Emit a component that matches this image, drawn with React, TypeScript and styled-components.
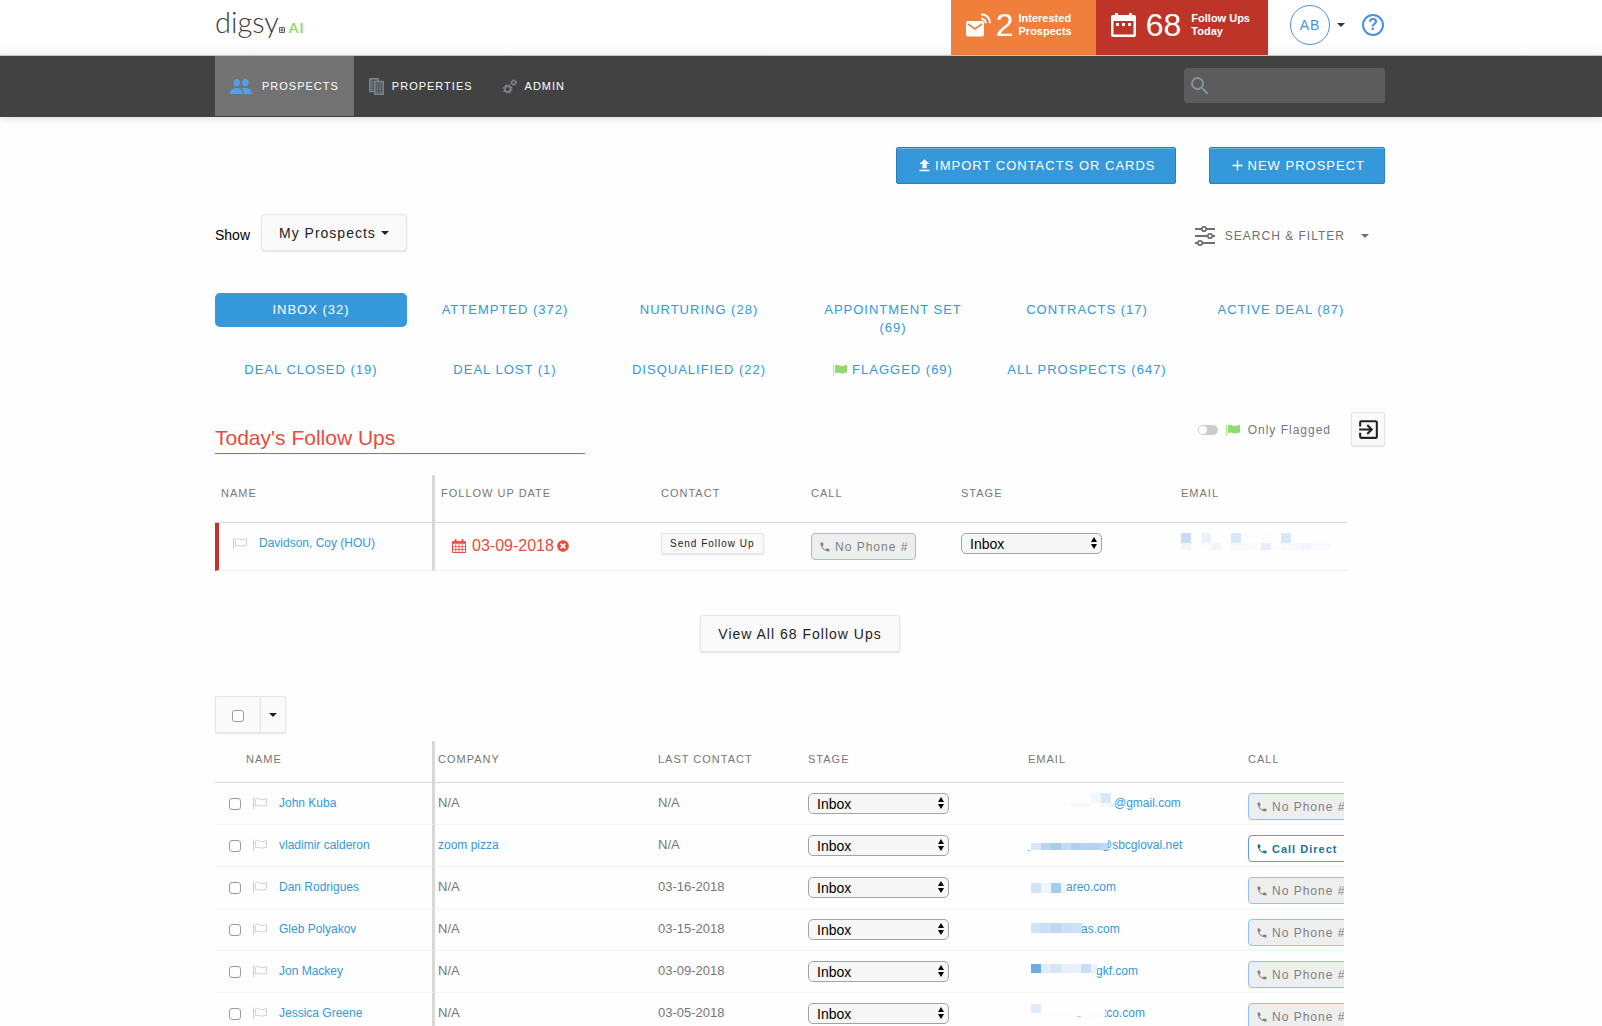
import React from "react";
import styled, { createGlobalStyle, css } from "styled-components";
import {
  MdSearch,
  MdFileUpload,
  MdAdd,
  MdExitToApp,
  MdPhone,
} from "react-icons/md";
import { FaTimesCircle } from "react-icons/fa";

const color = {
  blue: "#3498db",
  blueDark: "#2c7fb8",
  navy: "#424242",
  navActive: "#727272",
  grey: "#777777",
  line: "#d8d8d8",
  faint: "#f2f2f2",
  red: "#e74c3c",
  redDark: "#bf3429",
  orange: "#ef7f3a",
  green: "#8fdb6c",
  soft: "#fafafa",
};

const GlobalStyle = createGlobalStyle`
  *, *::before, *::after { box-sizing: border-box; }
  html { scrollbar-width: none; }
  body {
    margin: 0;
    background: #fefefe;
    color: #000;
    font-family: "Liberation Sans", Arial, Helvetica, sans-serif;
    font-size: 14px;
    line-height: 20px;
  }
  button, input, select { font-family: inherit; }
  button { cursor: pointer; }
  a { text-decoration: none; }
  svg { display: block; flex: none; }
`;

const Container = styled.div`
  width: 100%;
  max-width: 1200px;
  margin: 0 auto;
  padding: 0 16px 0 14px;
`;

/* ---------- top bar ---------- */

const TopBar = styled.header`
  background: linear-gradient(#fff 70%, #f9f9f9);
  border-bottom: 1px solid #c9c9c9;
`;

const TopInner = styled(Container)`
  display: flex;
  justify-content: space-between;
  height: 55px;
`;

const Logo = styled.a`
  display: flex;
  align-items: baseline;
  height: 40px;
  color: #3c3c3c;
  font-family: Lato, "Liberation Sans", sans-serif;
  font-size: 29px;
  font-weight: 300;
  line-height: 44px;
`;

const LogoSuffix = styled.span`
  margin-left: 4px;
  color: ${color.green};
  font-size: 14px;
  font-weight: 700;
  letter-spacing: 1px;
`;

const TopRight = styled.div`
  display: flex;
`;

const Counter = styled.a<{ $bg: string; $gap: number; $right: number }>`
  display: flex;
  align-items: center;
  gap: ${(p) => p.$gap}px;
  padding: 0 ${(p) => p.$right}px 6px 15px;
  background: ${(p) => p.$bg};
  color: #fff;
`;

const CounterValue = styled.span`
  font-size: 32px;
  line-height: 40px;
`;

const CounterLabel = styled.span`
  font-size: 11px;
  font-weight: 700;
  line-height: 13px;
`;

const Account = styled.div`
  display: flex;
  align-items: center;
  padding: 0 1px 6px 22px;
  color: #4a90e2;
`;

const AvatarButton = styled.button`
  display: flex;
  align-items: center;
  gap: 7px;
  margin-right: 17px;
  padding: 0;
  border: 0;
  background: none;
  color: #333;
`;

const Avatar = styled.span`
  display: flex;
  align-items: center;
  justify-content: center;
  width: 40px;
  height: 40px;
  border: 1px solid #4a90e2;
  border-radius: 50%;
  color: #4a90e2;
  font-size: 14px;
  letter-spacing: 1px;
`;

const HelpLink = styled.a`
  display: flex;
  align-items: center;
  justify-content: center;
  width: 22px;
  height: 22px;
  border: 2px solid #4a90e2;
  border-radius: 50%;
  color: #4a90e2;
  font-size: 16px;
  font-weight: 700;
  line-height: 18px;
`;

/* ---------- navigation ---------- */

const NavBar = styled.nav`
  background: ${color.navy};
  box-shadow: 0 2px 8px rgba(0, 0, 0, 0.12);
`;

const NavInner = styled(Container)`
  display: flex;
  align-items: center;
  justify-content: space-between;
  height: 61px;
`;

const NavItems = styled.div`
  display: flex;
  align-self: flex-start;
`;

const NavItem = styled.a<{ $active?: boolean }>`
  display: flex;
  align-items: center;
  gap: ${(p) => (p.$active ? 10 : 8)}px;
  height: 60px;
  padding: 0 15px;
  background: ${(p) => (p.$active ? color.navActive : "transparent")};
  color: #fff;
  font-size: 11px;
  letter-spacing: 1px;

  & > svg {
    color: ${(p) => (p.$active ? "#559fe8" : "#7b858e")};
  }
`;

const SearchBox = styled.label`
  display: flex;
  align-items: center;
  width: 201px;
  height: 35px;
  margin-bottom: 2px;
  padding-left: 4px;
  border-radius: 3px;
  background: #5c5c5c;
  color: #87929c;
`;

const SearchInput = styled.input`
  flex: 1;
  min-width: 0;
  height: 100%;
  border: 0;
  outline: 0;
  background: transparent;
  color: #fff;
  font-size: 14px;
`;

/* ---------- buttons ---------- */

const buttonBase = css`
  display: flex;
  align-items: center;
  justify-content: center;
  border-radius: 2px;
`;

const PrimaryButton = styled.button`
  ${buttonBase}
  gap: 2px;
  height: 37px;
  padding: 0 19px;
  border: 1px solid ${color.blueDark};
  background: ${color.blue};
  box-shadow: inset 0 1px 0 #6cb6e8;
  color: #fff;
  font-size: 13px;
  letter-spacing: 1px;
`;

const SoftButton = styled.button<{ $round?: boolean }>`
  ${buttonBase}
  gap: 5px;
  height: 37px;
  padding: 0 17px;
  border: 1px solid #e6e6e6;
  border-radius: ${(p) => (p.$round ? 4 : 2)}px;
  background: ${color.soft};
  box-shadow: 0 1px 2px rgba(0, 0, 0, 0.1);
  color: #222;
  font-size: 14px;
  letter-spacing: 1px;
`;

const SquareButton = styled(SoftButton)`
  width: 34px;
  height: 34px;
  padding: 0;
`;

const SmallButton = styled(SoftButton)`
  height: 21px;
  padding: 0 8px;
  font-size: 10px;
  white-space: nowrap;
`;

const CallButton = styled.button<{ $active?: boolean }>`
  ${buttonBase}
  justify-content: flex-start;
  gap: 4px;
  width: 105px;
  height: 27px;
  padding: 0 0 0 7px;
  border: 1px solid ${(p) => (p.$active ? "#5a9fe0" : "#90c0ee")};
  border-radius: 4px;
  background: ${(p) => (p.$active ? "#fff" : "#eeeeee")};
  color: ${(p) => (p.$active ? "#1c7396" : "#808080")};
  font-size: ${(p) => (p.$active ? 11 : 12)}px;
  font-weight: ${(p) => (p.$active ? 700 : 400)};
  letter-spacing: 1px;
  white-space: nowrap;
`;

/* ---------- page sections ---------- */

const Actions = styled.div`
  display: flex;
  justify-content: flex-end;
  gap: 33px;
  margin-top: 30px;
`;

const FilterRow = styled.div`
  display: flex;
  align-items: center;
  justify-content: space-between;
  margin-top: 30px;
`;

const ShowGroup = styled.div`
  display: flex;
  align-items: center;
  gap: 11px;
`;

const ShowLabel = styled.span`
  padding-top: 4px;
`;

const FilterButton = styled.button`
  display: flex;
  align-items: center;
  gap: 10px;
  padding: 6px 16px 0 0;
  border: 0;
  background: none;
  color: #707070;
  font-size: 12px;
  letter-spacing: 1px;
`;

const FilterCaret = styled.span`
  padding-left: 6px;
`;

const StageTabs = styled.div`
  display: grid;
  grid-template-columns: repeat(6, 1fr);
  gap: 8px 2px;
  align-items: start;
  margin-top: 42px;
  padding-right: 8px;
`;

const StageTab = styled.a<{ $active?: boolean }>`
  display: flex;
  align-items: center;
  justify-content: center;
  gap: 5px;
  padding: 8px 16px;
  border-radius: 5px;
  background: ${(p) => (p.$active ? color.blue : "transparent")};
  color: ${(p) => (p.$active ? "#fff" : color.blue)};
  font-size: 13px;
  letter-spacing: 1px;
  line-height: 18px;
  text-align: center;
`;

const AllTab = styled(StageTab)`
  padding: 8px 0;
  white-space: nowrap;
`;

const SectionHead = styled.div`
  display: flex;
  align-items: flex-start;
  justify-content: space-between;
  margin-top: 25px;
`;

const SectionTitle = styled.h2`
  width: 370px;
  margin: 0;
  padding-top: 10px;
  border-bottom: 1px solid ${color.red};
  color: ${color.red};
  font-size: 21px;
  font-weight: 400;
  line-height: 31px;
`;

const HeadControls = styled.div`
  display: flex;
  align-items: center;
  gap: 20px;
`;

const ToggleLabel = styled.label`
  display: flex;
  align-items: center;
  gap: 8px;
  padding-top: 2px;
  color: ${color.grey};
  font-size: 12px;
  letter-spacing: 1px;
`;

const Toggle = styled.input`
  appearance: none;
  display: flex;
  align-items: center;
  width: 20px;
  height: 10px;
  margin: 0;
  padding: 1px;
  border-radius: 5px;
  background: #cccccc;

  &::before {
    content: "";
    width: 8px;
    height: 8px;
    border-radius: 50%;
    background: #fff;
  }
  &:checked {
    justify-content: flex-end;
    background: ${color.green};
  }
`;

/* ---------- tables ---------- */

const TableFrame = styled.div<{ $max: number; $top: number }>`
  max-width: ${(p) => p.$max}px;
  margin-top: ${(p) => p.$top}px;
  overflow: hidden;
`;

const Table = styled.table<{ $width: number; $pad: number }>`
  width: ${(p) => p.$width}px;
  table-layout: fixed;
  border-collapse: separate;
  border-spacing: 0;

  th,
  td {
    padding: 10px 0 0 ${(p) => p.$pad}px;
    vertical-align: top;
    text-align: left;
  }
  th:first-child,
  td:first-child {
    border-right: 3px solid ${color.line};
  }
`;

const HeadCell = styled.th<{ $h: number }>`
  height: ${(p) => p.$h}px;
  border-bottom: 1px solid #d4d4d4;
  color: ${color.grey};
  font-size: 11px;
  font-weight: 400;
  letter-spacing: 1px;
  line-height: 16px;
`;

const HeadText = styled.span<{ $indent: number }>`
  padding-left: ${(p) => p.$indent}px;
`;

const Cell = styled.td<{ $h: number }>`
  height: ${(p) => p.$h}px;
  border-bottom: 1px solid ${color.faint};
  color: ${color.grey};
  font-size: 13px;
  line-height: 20px;
`;

const MarkedCell = styled(Cell)`
  border-left: 4px solid ${color.redDark};
`;

const NameLine = styled.div<{ $indent: number }>`
  display: flex;
  align-items: center;
  gap: 12px;
  padding-left: ${(p) => p.$indent}px;
`;

const TextLink = styled.a`
  color: ${color.blue};
  font-size: 12px;
`;

const Checkbox = styled.input`
  appearance: none;
  width: 12px;
  height: 12px;
  margin: 2px 0 0;
  border: 1px solid #9c9c9c;
  border-radius: 3px;
  background: #fff;
  &:checked {
    background: ${color.blue};
  }
`;

const DueDate = styled.div`
  display: flex;
  align-items: center;
  padding: 3px 0 0 11px;
  color: ${color.red};
`;

const DueText = styled.span`
  margin: 0 3px 0 6px;
  font-size: 16px;
`;

const SelectWrap = styled.div`
  position: relative;
  width: 141px;
  height: 21px;

  & > svg {
    position: absolute;
    top: 4px;
    right: 5px;
    pointer-events: none;
  }
`;

const StageSelect = styled.select`
  appearance: none;
  display: block;
  width: 100%;
  height: 100%;
  padding: 0 20px 0 8px;
  border: 1px solid #a2a2a2;
  border-radius: 5px;
  background: #f7f7f7;
  color: #000;
  font-size: 14px;
`;

const Center = styled.div`
  display: flex;
  justify-content: center;
  margin-top: 44px;
`;

const SelectAll = styled.div`
  display: flex;
  margin-top: 44px;
`;

const SelectAllBox = styled.label`
  display: flex;
  align-items: center;
  justify-content: center;
  width: 45px;
  height: 37px;
  border: 1px solid #e6e6e6;
  border-right: 0;
  border-radius: 2px 0 0 2px;
  background: ${color.soft};
  box-shadow: 0 1px 2px rgba(0, 0, 0, 0.1);
`;

const SelectAllMenu = styled(SoftButton)`
  width: 26px;
  padding: 0;
  border-radius: 0 2px 2px 0;
`;

const EmailLink = styled(TextLink)<{ $start: number }>`
  display: block;
  position: relative;
  height: 20px;
  padding-left: ${(p) => p.$start}px;

  & > svg {
    position: absolute;
    top: 0;
    left: 0;
  }
`;

/* ---------- drawings ---------- */

const Caret = ({ size = 8 }: { size?: number }) => (
  <svg width={size} height={size / 2} viewBox="0 0 8 4" fill="currentColor" aria-hidden="true">
    <path d="M0 0h8L4 4z" />
  </svg>
);

const WindowMark = () => (
  <svg width="6" height="6" viewBox="0 0 6 6" fill="none" stroke="#555" aria-hidden="true">
    <path d="M.5.5h5v5h-5zM3 0v6M0 3h6" strokeWidth="0.9" />
  </svg>
);

const People = () => (
  <svg width="22" height="15" viewBox="0 0 22 15" fill="currentColor" aria-hidden="true">
    <ellipse cx="6.800" cy="3.600" rx="3.200" ry="3.600" />
    <ellipse cx="15.400" cy="3.600" rx="3.200" ry="3.600" />
    <path d="M0 15c0-4 2.500-6 6.700-6 3.600 0 5.600 2 5.600 6z" />
    <path d="M11.300 9.400c1.200-.3 2.500-.4 4-.4 4.200 0 6.700 2 6.700 6h-8.500c0-2.500-.7-4.400-2.200-5.600z" />
  </svg>
);

const MailSignal = () => (
  <svg width="25" height="24" viewBox="0 0 25 24" fill="none" aria-hidden="true">
    <rect x="0" y="8" width="18" height="15.500" rx="2" fill="#fff" />
    <path d="M2 11l7 5 7-5" stroke="#ef7f3a" strokeWidth="1.600" />
    <path d="M15 5.500c2.800.3 4.500 2 4.800 4.800M15 1.200c5.300.3 8.700 3.700 9 9" stroke="#fff" strokeWidth="1.900" />
  </svg>
);

const CalendarBig = () => (
  <svg width="25" height="24" viewBox="0 0 25 24" aria-hidden="true">
    <path
      fill="#fff"
      fillRule="evenodd"
      d="M4 0h3v2h11V0h3v2h2a2 2 0 0 1 2 2v18a2 2 0 0 1-2 2H2a2 2 0 0 1-2-2V4a2 2 0 0 1 2-2h2zM2.500 8v13.500h20V8z"
    />
    <path fill="#fff" d="M5 10h3v3H5zM11 10h3v3h-3zM17 10h3v3h-3z" />
  </svg>
);

const Buildings = () => (
  <svg width="15" height="17" viewBox="0 0 15 17" fill="none" stroke="currentColor" aria-hidden="true">
    <path d="M.8.8h8.400v2.800H5.800v9.900H.8z" fill="currentColor" fillOpacity="0.35" stroke="none" />
    <path d="M5.800 3.600h8.400v12.600H5.800z" fill="currentColor" fillOpacity="0.35" stroke="none" />
    <path d="M5 13.500H.8V.8h8.400V3" strokeWidth="1.500" />
    <path d="M5.800 3.600h8.400v12.600H5.800z" strokeWidth="1.500" />
    <path d="M8.500 5.500v9M11.500 5.500v9M3 3v9" strokeWidth="1.200" strokeDasharray="1.500 1" />
  </svg>
);

const Gears = () => (
  <svg width="14" height="15" viewBox="0 0 14 15" fill="none" stroke="currentColor" aria-hidden="true">
    <circle cx="4.700" cy="10" r="2.900" strokeWidth="1.700" />
    <circle cx="4.700" cy="10" r="4.100" strokeWidth="1.300" strokeDasharray="1.600 1.620" />
    <circle cx="10.700" cy="3.500" r="1.900" strokeWidth="1.400" />
    <circle cx="10.700" cy="3.500" r="2.800" strokeWidth="1.100" strokeDasharray="1.100 1.100" />
  </svg>
);

const Sliders = () => (
  <svg width="20" height="20" viewBox="0 0 20 20" fill="none" stroke="currentColor" strokeWidth="1.800" aria-hidden="true">
    <path d="M0 3h6.500M11.500 3H20M0 10h12.500M17.500 10H20M0 17h2.500M7.500 17H20" />
    <circle cx="9" cy="3" r="2.200" />
    <circle cx="15" cy="10" r="2.200" />
    <circle cx="5" cy="17" r="2.200" />
  </svg>
);

const GreenFlag = () => (
  <svg width="14" height="12" viewBox="0 0 14 12" aria-hidden="true">
    <path d="M.5.500v11.500" stroke="#b5e89c" strokeWidth="1.200" />
    <path d="M2 1.500c3-2 5 1.500 8 .4 1.500-.5 3-.9 4-.9v7.500c-2 0-3 .9-5 .9-2.500 0-4-1.900-7 0z" fill="#8fdb6c" />
  </svg>
);

const EmptyFlag = () => (
  <svg width="14" height="12" viewBox="0 0 14 12" fill="none" stroke="#cfcfcf" aria-hidden="true">
    <path d="M.5.500v11.500" strokeWidth="1" />
    <path d="M2.300 2.200c3-2 5 1.300 7.700.3 1.200-.5 2.500-.8 3.500-.8v6.600c-2 0-3 .8-4.700.8-2.200 0-3.800-1.700-6.500 0z" />
  </svg>
);

const CalendarSmall = () => (
  <svg width="14" height="14" viewBox="0 0 14 14" fill="none" stroke="currentColor" aria-hidden="true">
    <path d="M.5 3h13v10.500H.5z" />
    <path d="M.5 3.500h13" strokeWidth="2.500" />
    <path d="M3.500.300v3M10.500.300v3" strokeWidth="2" />
    <path d="M3.800 5v8.500M7 5v8.500M10.200 5v8.500M.5 7.700h13M.5 10.500h13" strokeWidth=".8" />
  </svg>
);

const UpDown = () => (
  <svg width="6" height="12" viewBox="0 0 6 12" fill="#000" aria-hidden="true">
    <path d="M3 0l3 5H0zM3 12L0 7h6z" />
  </svg>
);

type Block = [number, number, number, number, string];

const Mosaic = ({ blocks, width = 166 }: { blocks: Block[]; width?: number }) => (
  <svg width={width} height="24" viewBox={`0 0 ${width} 24`} shapeRendering="crispEdges" aria-hidden="true">
    {blocks.map(([x, y, w, h, fill], i) => (
      <rect key={i} x={x} y={y} width={w} height={h} fill={fill} />
    ))}
  </svg>
);

/* ---------- data ---------- */

const followUpBlocks: Block[] = [
  [0, 0, 10, 10, "#c8dcf2"],
  [20, 0, 10, 10, "#e9f3fb"],
  [50, 0, 10, 10, "#d8e8f7"],
  [80, 0, 10, 10, "#fafcff"],
  [100, 0, 10, 10, "#d8e8f7"],
  [0, 10, 10, 7, "#f2f6fc"],
  [10, 10, 20, 7, "#fbfcff"],
  [30, 10, 10, 7, "#f1f6fc"],
  [50, 10, 20, 7, "#f8f9fe"],
  [70, 10, 10, 7, "#fafbff"],
  [80, 10, 10, 7, "#e7effa"],
  [90, 10, 10, 7, "#fbfcff"],
  [100, 10, 20, 7, "#f8f9fe"],
  [120, 10, 10, 7, "#f2f6fc"],
  [130, 10, 20, 7, "#f9fafe"],
];

type Prospect = {
  name: string;
  company?: string;
  last: string;
  email: string;
  start: number;
  blocks: Block[];
  phone?: boolean;
};

const prospects: Prospect[] = [
  {
    name: "John Kuba",
    last: "N/A",
    email: "@gmail.com",
    start: 86,
    blocks: [
      [63, 0, 10, 10, "#f2f7fb"],
      [73, 0, 10, 10, "#d8e8f6"],
      [3, 10, 40, 4, "#fcfdfe"],
      [43, 10, 20, 4, "#f5f8fd"],
      [73, 10, 10, 4, "#f3f8fd"],
      [83, 10, 4, 4, "#e2eefa"],
    ],
  },
  {
    name: "vladimir calderon",
    company: "zoom pizza",
    last: "N/A",
    email: "@sbcgloval.net",
    start: 72,
    phone: true,
    blocks: [
      [3, 0, 77, 8, "#fefefe"],
      [3, 8, 10, 7, "#d8e6f5"],
      [13, 8, 10, 7, "#bcd5ef"],
      [23, 8, 10, 7, "#a8cbeb"],
      [33, 8, 10, 7, "#c4dbf2"],
      [43, 8, 10, 7, "#aecfee"],
      [53, 8, 20, 7, "#b6d3ef"],
      [73, 8, 7, 7, "#bdd7f0"],
      [0, 15, 2, 1, "#6ab2e4"],
    ],
  },
  {
    name: "Dan Rodrigues",
    last: "03-16-2018",
    email: "areo.com",
    start: 38,
    blocks: [
      [3, 6, 10, 10, "#d2e3f5"],
      [13, 6, 10, 10, "#f0f6fb"],
      [23, 6, 10, 10, "#a3cdee"],
      [33, 6, 5, 10, "#f3f8fd"],
    ],
  },
  {
    name: "Gleb Polyakov",
    last: "03-15-2018",
    email: "as.com",
    start: 53,
    blocks: [
      [3, 4, 10, 10, "#cfe4f6"],
      [13, 4, 10, 10, "#c8def4"],
      [23, 4, 10, 10, "#c1d7f1"],
      [33, 4, 10, 10, "#cadff4"],
      [43, 4, 11, 10, "#cce2f6"],
    ],
  },
  {
    name: "Jon Mackey",
    last: "03-09-2018",
    email: "gkf.com",
    start: 68,
    blocks: [
      [3, 3, 10, 9, "#6bade2"],
      [13, 3, 10, 9, "#e0ecf8"],
      [23, 3, 10, 9, "#d6e5f4"],
      [33, 3, 10, 9, "#e5eef9"],
      [43, 3, 10, 9, "#e8f1fa"],
      [53, 3, 10, 9, "#c6dff4"],
      [63, 3, 6, 9, "#ecf3fb"],
      [63, 12, 5, 8, "#f9fbfd"],
    ],
  },
  {
    name: "Jessica Greene",
    last: "03-05-2018",
    email: "tco.com",
    start: 75,
    blocks: [
      [3, 1, 10, 9, "#e0ebf7"],
      [3, 10, 40, 4, "#fbfcfe"],
      [63, 10, 10, 4, "#f8fafd"],
      [49, 13, 4, 1, "#a9cfee"],
      [73, 3, 4, 13, "#fdfdfe"],
    ],
  },
];

const stages: { label: string; active?: boolean; flag?: boolean; wide?: boolean }[] = [
  { label: "INBOX (32)", active: true },
  { label: "ATTEMPTED (372)" },
  { label: "NURTURING (28)" },
  { label: "APPOINTMENT SET (69)" },
  { label: "CONTRACTS (17)" },
  { label: "ACTIVE DEAL (87)" },
  { label: "DEAL CLOSED (19)" },
  { label: "DEAL LOST (1)" },
  { label: "DISQUALIFIED (22)" },
  { label: "FLAGGED (69)", flag: true },
  { label: "ALL PROSPECTS (647)", wide: true },
];

/* ---------- composed parts ---------- */

const StagePicker = ({ label }: { label: string }) => (
  <SelectWrap>
    <StageSelect aria-label={label} defaultValue="Inbox">
      <option>Inbox</option>
      <option>Attempted</option>
      <option>Nurturing</option>
    </StageSelect>
    <UpDown />
  </SelectWrap>
);

const Call = ({ active }: { active?: boolean }) => (
  <CallButton type="button" $active={active}>
    <MdPhone size={12} />
    {active ? "Call Direct" : "No Phone #"}
  </CallButton>
);

const FollowUpsTable = () => (
  <TableFrame $max={1132} $top={21}>
    <Table $width={1132} $pad={6}>
      <colgroup>
        <col width="220" />
        <col width="220" />
        <col width="150" />
        <col width="150" />
        <col width="220" />
        <col width="172" />
      </colgroup>
      <thead>
        <tr>
          {["NAME", "FOLLOW UP DATE", "CONTACT", "CALL", "STAGE", "EMAIL"].map((h) => (
            <HeadCell key={h} scope="col" $h={48}>
              {h}
            </HeadCell>
          ))}
        </tr>
      </thead>
      <tbody>
        <tr>
          <MarkedCell $h={48}>
            <NameLine $indent={8}>
              <EmptyFlag />
              <TextLink href="#davidson">Davidson, Coy (HOU)</TextLink>
            </NameLine>
          </MarkedCell>
          <Cell $h={48}>
            <DueDate>
              <CalendarSmall />
              <DueText>03-09-2018</DueText>
              <FaTimesCircle size={12} />
            </DueDate>
          </Cell>
          <Cell $h={48}>
            <SmallButton type="button">Send Follow Up</SmallButton>
          </Cell>
          <Cell $h={48}>
            <Call />
          </Cell>
          <Cell $h={48}>
            <StagePicker label="Stage of Davidson, Coy" />
          </Cell>
          <Cell $h={48}>
            <Mosaic blocks={followUpBlocks} />
          </Cell>
        </tr>
      </tbody>
    </Table>
  </TableFrame>
);

const ProspectsTable = () => (
  <TableFrame $max={1129} $top={8}>
    <Table $width={1180} $pad={3}>
      <colgroup>
        <col width="220" />
        <col width="220" />
        <col width="150" />
        <col width="220" />
        <col width="220" />
        <col width="150" />
      </colgroup>
      <thead>
        <tr>
          {["NAME", "COMPANY", "LAST CONTACT", "STAGE", "EMAIL", "CALL"].map((h, i) => (
            <HeadCell key={h} scope="col" $h={42}>
              <HeadText $indent={i === 0 ? 28 : 0}>{h}</HeadText>
            </HeadCell>
          ))}
        </tr>
      </thead>
      <tbody>
        {prospects.map((p) => (
          <tr key={p.name}>
            <Cell $h={42}>
              <NameLine $indent={11}>
                <Checkbox type="checkbox" aria-label={`Select ${p.name}`} />
                <EmptyFlag />
                <TextLink href="#prospect">{p.name}</TextLink>
              </NameLine>
            </Cell>
            <Cell $h={42}>{p.company ? <TextLink href="#company">{p.company}</TextLink> : "N/A"}</Cell>
            <Cell $h={42}>{p.last}</Cell>
            <Cell $h={42}>
              <StagePicker label={`Stage of ${p.name}`} />
            </Cell>
            <Cell $h={42}>
              <EmailLink href="#email" $start={p.start}>
                {p.email}
                <Mosaic blocks={p.blocks} />
              </EmailLink>
            </Cell>
            <Cell $h={42}>
              <Call active={p.phone} />
            </Cell>
          </tr>
        ))}
      </tbody>
    </Table>
  </TableFrame>
);

export default function App() {
  return (
    <>
      <GlobalStyle />
      <TopBar>
        <TopInner>
          <Logo href="#home">
            digsy
            <WindowMark />
            <LogoSuffix>AI</LogoSuffix>
          </Logo>
          <TopRight>
            <Counter href="#interested" $bg={color.orange} $gap={5} $right={24}>
              <MailSignal />
              <CounterValue>2</CounterValue>
              <CounterLabel>
                Interested
                <br />
                Prospects
              </CounterLabel>
            </Counter>
            <Counter href="#followups" $bg={color.redDark} $gap={10} $right={18}>
              <CalendarBig />
              <CounterValue>68</CounterValue>
              <CounterLabel>
                Follow Ups
                <br />
                Today
              </CounterLabel>
            </Counter>
            <Account>
              <AvatarButton type="button" aria-label="Account menu">
                <Avatar>AB</Avatar>
                <Caret />
              </AvatarButton>
              <HelpLink href="#help" aria-label="Help">
                ?
              </HelpLink>
            </Account>
          </TopRight>
        </TopInner>
      </TopBar>

      <NavBar>
        <NavInner>
          <NavItems>
            <NavItem href="#prospects" $active>
              <People />
              PROSPECTS
            </NavItem>
            <NavItem href="#properties">
              <Buildings />
              PROPERTIES
            </NavItem>
            <NavItem href="#admin">
              <Gears />
              ADMIN
            </NavItem>
          </NavItems>
          <SearchBox>
            <MdSearch size={24} />
            <SearchInput type="text" aria-label="Search" />
          </SearchBox>
        </NavInner>
      </NavBar>

      <Container as="main">
        <Actions>
          <PrimaryButton type="button">
            <MdFileUpload size={17} />
            IMPORT CONTACTS OR CARDS
          </PrimaryButton>
          <PrimaryButton type="button">
            <MdAdd size={17} />
            NEW PROSPECT
          </PrimaryButton>
        </Actions>

        <FilterRow>
          <ShowGroup>
            <ShowLabel>Show</ShowLabel>
            <SoftButton type="button" $round>
              My Prospects
              <Caret />
            </SoftButton>
          </ShowGroup>
          <FilterButton type="button">
            <Sliders />
            SEARCH &amp; FILTER
            <FilterCaret>
              <Caret />
            </FilterCaret>
          </FilterButton>
        </FilterRow>

        <StageTabs>
          {stages.map((s) => {
            const Tab = s.wide ? AllTab : StageTab;
            return (
              <Tab key={s.label} href="#stage" $active={s.active}>
                {s.flag && <GreenFlag />}
                {s.label}
              </Tab>
            );
          })}
        </StageTabs>

        <SectionHead>
          <SectionTitle>Today's Follow Ups</SectionTitle>
          <HeadControls>
            <ToggleLabel>
              <Toggle type="checkbox" />
              <GreenFlag />
              Only Flagged
            </ToggleLabel>
            <SquareButton type="button" aria-label="Export">
              <MdExitToApp size={25} />
            </SquareButton>
          </HeadControls>
        </SectionHead>

        <FollowUpsTable />

        <Center>
          <SoftButton type="button">View All 68 Follow Ups</SoftButton>
        </Center>

        <SelectAll>
          <SelectAllBox>
            <Checkbox type="checkbox" aria-label="Select all prospects" />
          </SelectAllBox>
          <SelectAllMenu type="button" aria-label="Selection menu">
            <Caret />
          </SelectAllMenu>
        </SelectAll>

        <ProspectsTable />
      </Container>
    </>
  );
}
